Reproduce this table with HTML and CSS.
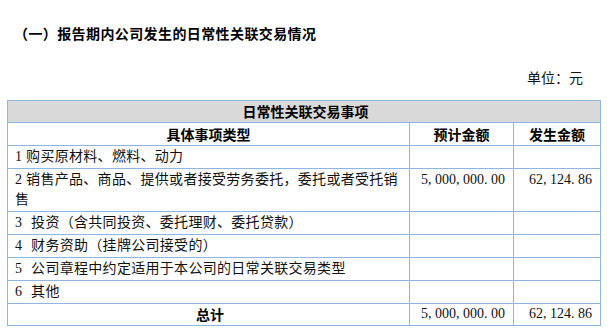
FILE: index.html
```html
<!DOCTYPE html>
<html lang="zh-CN">
<head>
<meta charset="utf-8">
<link rel="stylesheet" href="styles.css">
</head>
<body>
<div class="page">
  <h2 class="title">（一）报告期内公司发生的日常性关联交易情况</h2>
  <div class="unit">单位：元</div>
  <table class="tbl">
    <colgroup>
      <col class="c1"><col class="c2"><col class="c3">
    </colgroup>
    <tr class="row-cap"><td colspan="3" class="cap">日常性关联交易事项</td></tr>
    <tr class="row-hdr">
      <td class="hd">具体事项类型</td>
      <td class="hd">预计金额</td>
      <td class="hd">发生金额</td>
    </tr>
    <tr><td class="txt">1 购买原材料、燃料、动力</td><td></td><td></td></tr>
    <tr>
      <td class="txt">2 销售产品、商品、提供或者接受劳务委托，委托或者受托销售</td>
      <td class="num">5<span class="p">,</span>000<span class="p">,</span>000<span class="p">.</span>00</td>
      <td class="num">62<span class="p">,</span>124<span class="p">.</span>86</td>
    </tr>
    <tr><td class="txt wide">3 投资（含共同投资、委托理财、委托贷款）</td><td></td><td></td></tr>
    <tr><td class="txt wide">4 财务资助（挂牌公司接受的）</td><td></td><td></td></tr>
    <tr><td class="txt wide">5 公司章程中约定适用于本公司的日常关联交易类型</td><td></td><td></td></tr>
    <tr><td class="txt wide">6 其他</td><td></td><td></td></tr>
    <tr class="row-total">
      <td class="hd">总计</td>
      <td class="num">5<span class="p">,</span>000<span class="p">,</span>000<span class="p">.</span>00</td>
      <td class="num">62<span class="p">,</span>124<span class="p">.</span>86</td>
    </tr>
  </table>
</div>
</body>
</html>
```

FILE: styles.css
```css
html, body {
  margin: 0;
  padding: 0;
  background: #ffffff;
}

body {
  font-family: "Liberation Serif", "Noto Sans CJK SC", serif;
  font-size: 14px;
  color: #111111;
}

.page {
  width: 608px;
  height: 332px;
  overflow: hidden;
}

.title {
  margin: 0;
  padding: 23px 0 0 14px;
  font-family: "Noto Sans CJK SC", sans-serif;
  font-size: 14px;
  letter-spacing: 0.4px;
  font-weight: 700;
  line-height: 20px;
  color: #000000;
}

.unit {
  margin-top: 26px;
  padding-right: 25px;
  text-align: right;
  line-height: 20px;
  height: 20px;
}

.tbl {
  margin: 11px 0 0 7px;
  width: 593px;
  border-collapse: collapse;
  table-layout: fixed;
}

.c1 { width: 402px; }
.c2 { width: 104px; }
.c3 { width: 87px; }

.tbl td {
  border: 1px solid #8fb6e2;
  padding: 1px 4px 1px 7px;
  line-height: 20px;
  vertical-align: top;
}

.tbl td.txt {
  padding-right: 4px;
  letter-spacing: 0.3px;
}

.tbl td.wide {
  word-spacing: 5px;
}

.row-cap td {
  background: #d9d9d9;
  padding-top: 0;
}

.cap,
.hd {
  text-align: center;
  font-family: "Noto Sans CJK SC", sans-serif;
  font-weight: 700;
  color: #000000;
}

.row-hdr td.hd {
  padding-left: 0;
  padding-right: 0;
}

.row-total td {
  padding-top: 0;
}

.txt {
  text-align: left;
}

.tbl td.num {
  text-align: right;
  padding-right: 8px;
  padding-left: 0;
  white-space: nowrap;
}

.p {
  letter-spacing: 3.5px;
}
```
